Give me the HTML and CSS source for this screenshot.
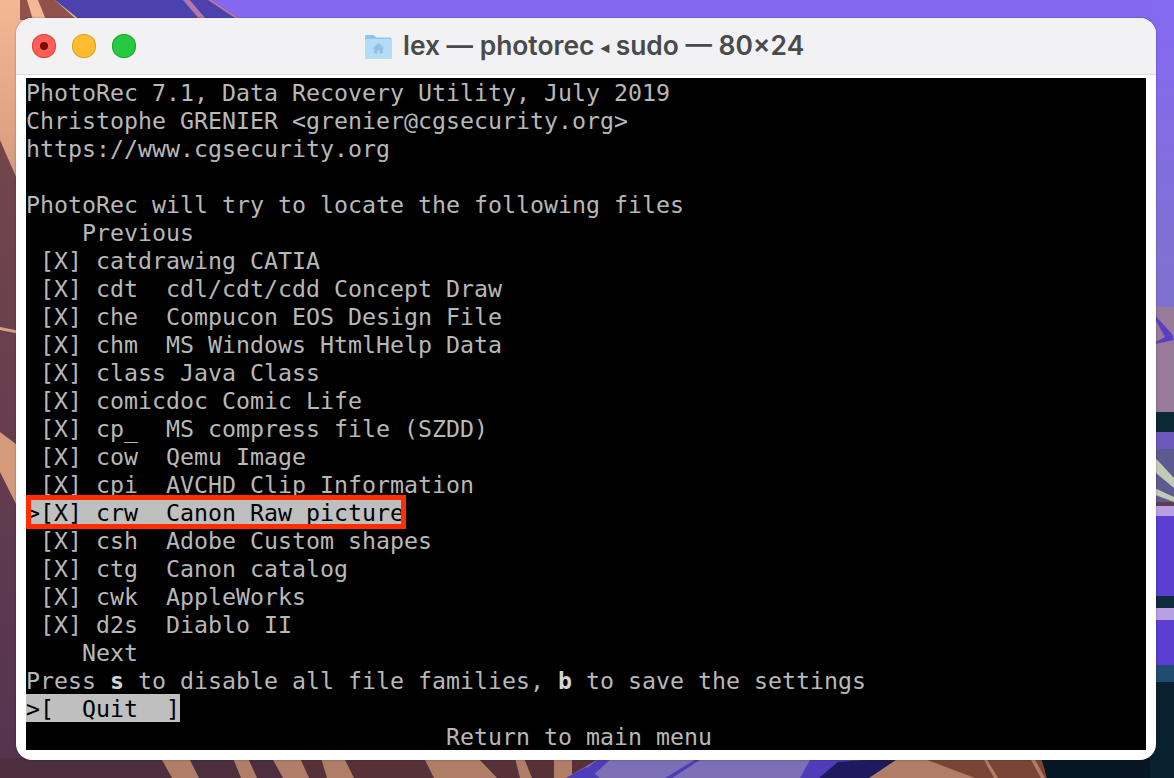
FILE: index.html
```html
<!DOCTYPE html>
<html lang="en">
<head>
<meta charset="utf-8">
<title>lex — photorec ◂ sudo — 80×24</title>
<link rel="stylesheet" href="styles.css">
</head>
<body>
<svg class="wallpaper" viewBox="0 0 1174 778" width="1174" height="778" aria-hidden="true">
  <defs>
    <linearGradient id="plum" x1="0" y1="0" x2="0" y2="1"><stop offset="0" stop-color="#7b4a4a"/><stop offset="1" stop-color="#533350"/></linearGradient>
    <linearGradient id="peach" x1="0" y1="0" x2="0" y2="1"><stop offset="0" stop-color="#f4b896"/><stop offset="1" stop-color="#d59a7c"/></linearGradient>
    <linearGradient id="violet" x1="0" y1="0" x2="0" y2="1"><stop offset="0" stop-color="#8469f2"/><stop offset="1" stop-color="#7f72cc"/></linearGradient>
  </defs>
  <rect width="1174" height="778" fill="url(#plum)"/>
  <!-- top strip -->
  <polygon points="0,0 14,0 20,18 0,40" fill="url(#peach)"/>
  <polygon points="0,0 60,0 90,30 16,30 0,30" fill="#f4b896"/>
  <polygon points="13,0 27,0 33,20 19,20" fill="#90524a"/>
  <polygon points="38,0 55,0 77,20 46,20" fill="#90524a"/>
  <polygon points="55,0 183,0 205,20 80,20" fill="#4b42ae"/>
  <polygon points="183,0 190,0 207,20 200,20" fill="#b277b0"/>
  <polygon points="190,0 208,0 238,20 207,20" fill="#4b42ae"/>
  <polygon points="208,0 212,0 242,20 238,20" fill="#b277b0"/>
  <polygon points="212,0 1174,0 1174,20 242,20" fill="#8469f0"/>
  <!-- left strip -->
  <polygon points="0,0 20,0 20,186 0,140" fill="url(#peach)"/>
  <polygon points="0,327 20,331 20,334 0,330" fill="#d9a184"/>
  <polygon points="0,432 20,447 20,512 0,472" fill="#d49a7c"/>
  <!-- bottom strip -->
  <rect x="0" y="758" width="600" height="20" fill="#4c2f3e"/>
  <rect x="300" y="758" width="300" height="20" fill="#573138"/>
  <g fill="#b07d66">
    <polygon points="161,758 189,758 199,778 172,778"/>
    <polygon points="233,758 248,758 257,778 241,778"/>
    <polygon points="272,758 300,758 309,778 283,778"/>
    <polygon points="321,758 344,758 354,778 327,778"/>
    <polygon points="424,758 478,758 497,778 434,778"/>
    <polygon points="515,758 524,758 532,778 520,778"/>
    <polygon points="554,758 572,758 572,778 554,778"/>
  </g>
  <polygon points="566,778 600,758 820,758 800,778" fill="#7d6fb6"/>
  <polygon points="566,778 586,767 600,778" fill="#4f3cb8"/>
  <polygon points="574,778 600,758 612,758 590,778" fill="#4f3cb8"/>
  <polygon points="665,778 698,758 703,758 672,778" fill="#4f3cb8"/>
  <polygon points="800,778 811,758 855,758 822,778" fill="#4f3cb8"/>
  <polygon points="819,778 838,762 899,758 869,778" fill="#1f1a60"/>
  <polygon points="869,778 899,758 1045,758 1045,778" fill="#b07d66"/>
  <polygon points="922,758 1041,758 1047,778 975,778" fill="#7a4535"/>
  <polygon points="983,758 986,758 998,778 994,778" fill="#b07d66"/>
  <polygon points="1030,758 1034,758 1045,778 1041,778" fill="#b07d66"/>
  <polygon points="1041,758 1174,758 1174,778 1047,778" fill="#061622"/>
  <!-- right strip -->
  <rect x="1150" y="0" width="24" height="308" fill="url(#violet)"/>
  <rect x="1150" y="307" width="24" height="106" fill="#987a99"/>
  <polygon points="1150,310 1172,334 1174,340 1150,345 1165,337" fill="#5a3fc4"/>
  <rect x="1150" y="412" width="24" height="20" fill="#0d2836"/>
  <rect x="1150" y="432" width="24" height="18" fill="#6a59bb"/>
  <rect x="1150" y="449" width="24" height="53" fill="#5d5a90"/>
  <polygon points="1150,452 1174,478 1174,488 1150,468" fill="#c3cbb4"/>
  <polygon points="1150,486 1174,497 1174,502 1150,493" fill="#c3cbb4"/>
  <rect x="1150" y="506" width="24" height="10" fill="#b6a0e2"/>
  <rect x="1150" y="516" width="24" height="150" fill="#5b3ed2"/>
  <rect x="1150" y="596" width="24" height="12" fill="#0e2a3c"/>
  <rect x="1150" y="608" width="24" height="12" fill="#b6a0e2"/>
  <rect x="1150" y="665" width="24" height="17" fill="#214a70"/>
  <rect x="1150" y="682" width="24" height="96" fill="#08202f"/>
</svg>

<main class="window">
  <header class="titlebar">
    <div class="lights">
      <span class="light light-close"><span class="close-dot"></span></span>
      <span class="light light-min"></span>
      <span class="light light-max"></span>
    </div>
    <div class="title">
      <svg class="folder" viewBox="0 0 28 28" width="28" height="28" aria-hidden="true">
        <path d="M1 4.500a1.500 1.500 0 0 1 1.500-1.500h7l3 2.500h13.500a1.500 1.500 0 0 1 1.500 1.500v2h-26.500z" fill="#8ec6ee"/>
        <rect x="1" y="7" width="27" height="20" rx="1.500" fill="#b3dcf7"/>
        <path d="M14.500 11l-6 5.500h1.700v5h3v-3h2.600v3h3v-5h1.700z" fill="#8fc0e4"/>
      </svg>
      <span class="title-text">lex — photorec <span class="arrow">◂</span> sudo — 80×24</span>
    </div>
  </header>
  <div class="terminal">
    <div class="row">PhotoRec 7.1, Data Recovery Utility, July 2019</div>
    <div class="row">Christophe GRENIER &lt;grenier@cgsecurity.org&gt;</div>
    <div class="row">https://www.cgsecurity.org</div>
    <div class="row"> </div>
    <div class="row">PhotoRec will try to locate the following files</div>
    <div class="row">    Previous</div>
    <div class="row"> [X] catdrawing CATIA</div>
    <div class="row"> [X] cdt  cdl/cdt/cdd Concept Draw</div>
    <div class="row"> [X] che  Compucon EOS Design File</div>
    <div class="row"> [X] chm  MS Windows HtmlHelp Data</div>
    <div class="row"> [X] class Java Class</div>
    <div class="row"> [X] comicdoc Comic Life</div>
    <div class="row"> [X] cp_  MS compress file (SZDD)</div>
    <div class="row"> [X] cow  Qemu Image</div>
    <div class="row"> [X] cpi  AVCHD Clip Information</div>
    <div class="row"><span class="selected">&gt;[X] crw  Canon Raw picture<span class="callout"></span></span></div>
    <div class="row"> [X] csh  Adobe Custom shapes</div>
    <div class="row"> [X] ctg  Canon catalog</div>
    <div class="row"> [X] cwk  AppleWorks</div>
    <div class="row"> [X] d2s  Diablo II</div>
    <div class="row">    Next</div>
    <div class="row">Press <b class="key">s</b> to disable all file families, <b class="key">b</b> to save the settings</div>
    <div class="row"><span class="selected">&gt;[  Quit  ]</span></div>
    <div class="row">                              Return to main menu</div>
  </div>
</main>
</body>
</html>
```
FILE: styles.css
```css
* { box-sizing: border-box; }
html, body { margin: 0; height: 778px; overflow: hidden; }
body {
  position: relative;
  width: 1174px;
  padding: 18px 18px 18px 16px;
  background: #4c2f3e;
}
.wallpaper { position: absolute; left: 0; top: 0; }
.window {
  position: relative;
  display: flex;
  flex-direction: column;
  width: 1140px;
  height: 742px;
  background: #fff;
  border-radius: 16px;
  overflow: hidden;
  box-shadow: 0 0 2px rgba(30, 20, 60, .45);
}
.titlebar {
  display: flex;
  align-items: center;
  height: 57px;
  flex: none;
  padding-left: 16px;
  padding-bottom: 1px;
  background: #f2f1f4;
  border-bottom: 1px solid #dcdbdd;
}
.lights { display: flex; gap: 16px; }
.light {
  display: flex;
  align-items: center;
  justify-content: center;
  width: 24px;
  height: 24px;
  border-radius: 50%;
}
.light-close { background: #ff5f57; box-shadow: inset 0 0 0 1px #e0443e; }
.close-dot { width: 8px; height: 8px; border-radius: 50%; background: #7e0508; }
.light-min { background: #febc2e; box-shadow: inset 0 0 0 1px #dea123; }
.light-max { background: #28c840; box-shadow: inset 0 0 0 1px #1aab29; }
.title {
  display: flex;
  align-items: center;
  gap: 11px;
  margin-left: 228px;
}
.title-text {
  font: 600 26.400px/30px Inter, "Liberation Sans", sans-serif;
  color: #4a4a4a;
  white-space: pre;
}
.arrow { font-size: 16px; vertical-align: 2px; }
.terminal {
  flex: none;
  width: 1120px;
  height: 672px;
  margin: 3px 10px 0;
  background: #000;
  font-family: "DejaVu Sans Mono", monospace;
  font-size: 23.250px;
  line-height: 29px;
  color: #b8b8b8;
}
.row { height: 28px; white-space: pre; }
.key { color: #d4d4d4; }
.selected {
  position: relative;
  display: inline-block;
  height: 28px;
  background: #bfbfbf;
  color: #000;
}
.callout {
  position: absolute;
  left: 0;
  top: -3px;
  right: -2px;
  bottom: -3px;
  border: 5px solid #ff2d00;
}
```
